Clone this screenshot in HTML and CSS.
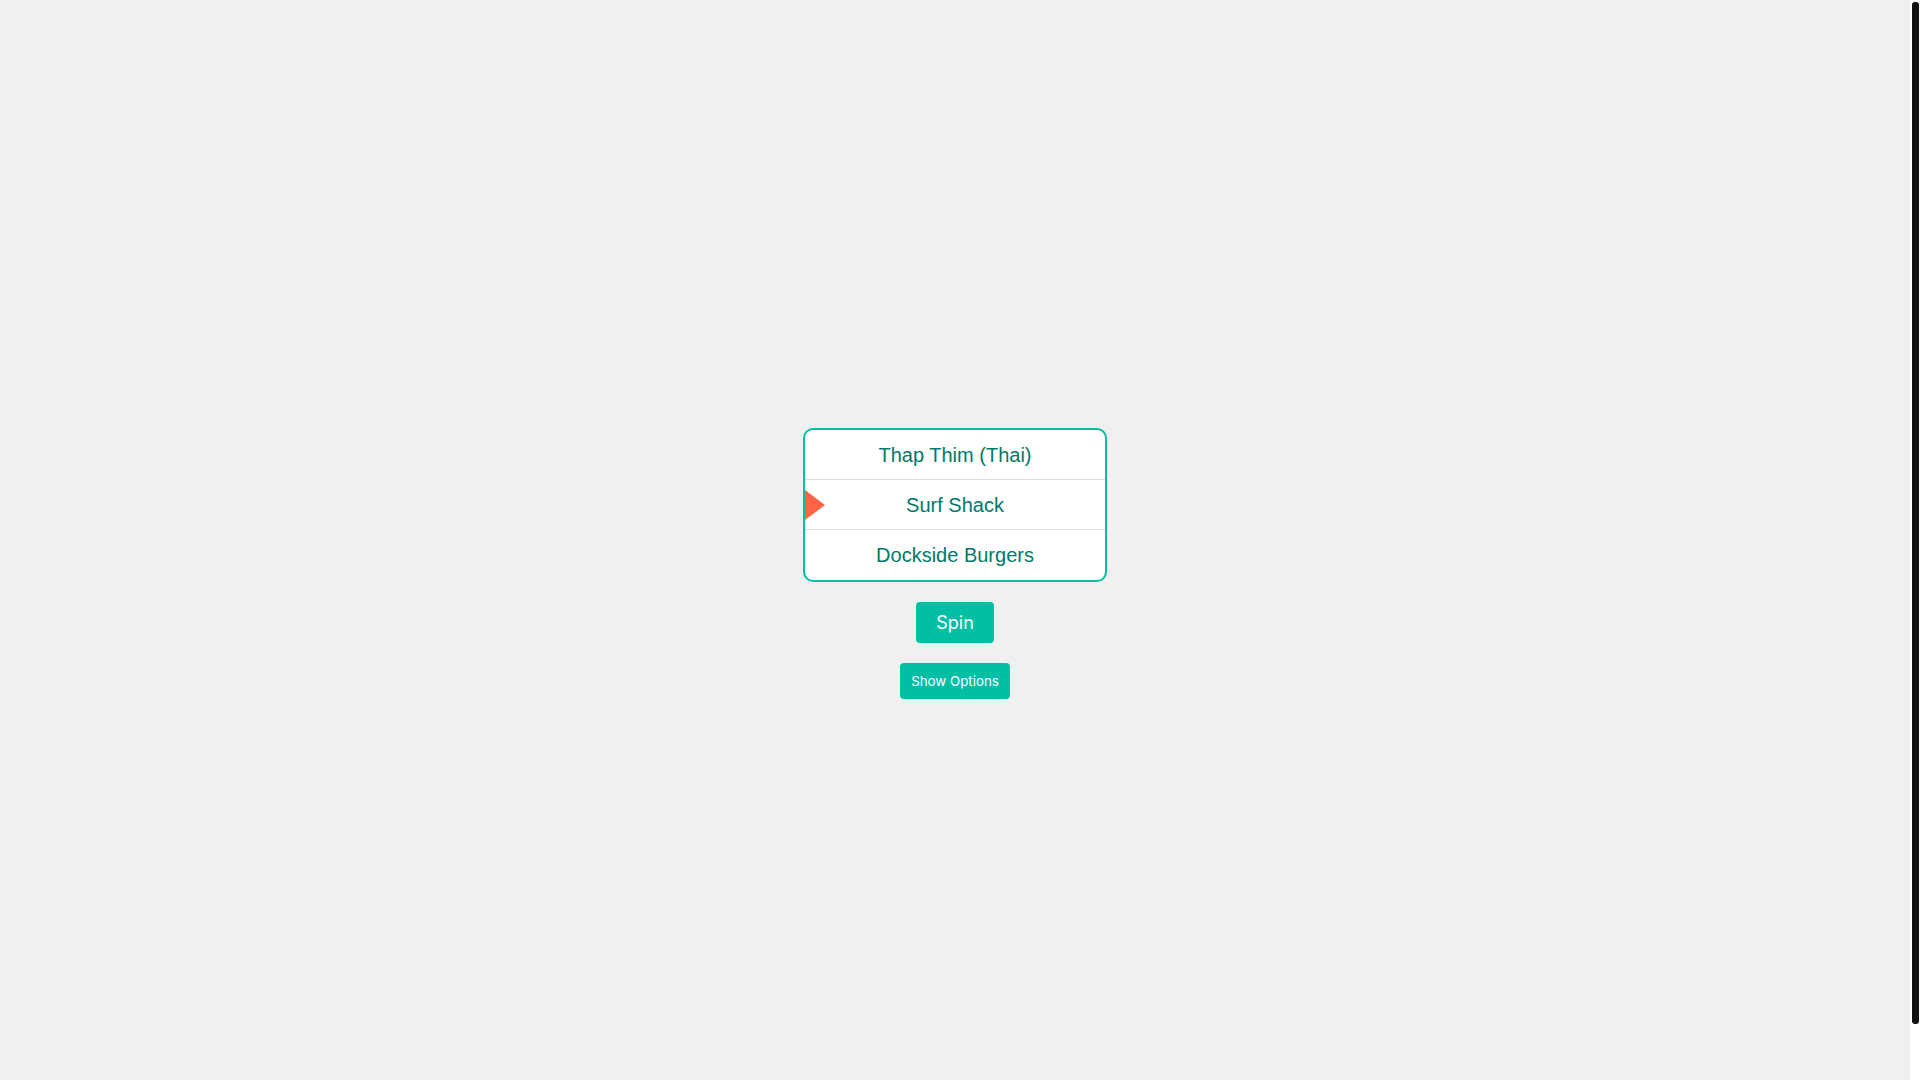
FILE: index.html
```html
<!DOCTYPE html>
<html lang="en">
<head>
<meta charset="utf-8">
<title>Restaurant Spinner</title>
<link rel="stylesheet" href="styles.css">
</head>
<body>
<main class="app">
  <div class="wheel">
    <span class="pointer"></span>
    <ul class="options">
      <li class="option">Thap Thim (Thai)</li>
      <li class="option">Surf Shack</li>
      <li class="option">Dockside Burgers</li>
    </ul>
  </div>
  <button class="btn btn-spin" type="button">Spin</button>
  <button class="btn btn-toggle" type="button">Show Options</button>
</main>
<div class="scrollbar" aria-hidden="true">
  <div class="scrollbar-thumb"></div>
</div>
</body>
</html>
```

FILE: styles.css
```css
html {
  background: #f0f0f0;
}

body {
  margin: 0;
  background: #f0f0f0;
  font-family: "Liberation Sans", Arial, sans-serif;
}

.app {
  width: calc(100% - 10px);
  min-height: 100vh;
  padding: 23px 0 34px;
  display: flex;
  flex-direction: column;
  align-items: center;
  justify-content: center;
  gap: 20px;
}

.wheel {
  position: relative;
  width: 300px;
  background: #ffffff;
  border: 2px solid #00bfa5;
  border-radius: 10px;
  overflow: hidden;
}

.options {
  list-style: none;
  margin: 0;
  padding: 0;
}

.option {
  padding: 14px 10px 12px;
  line-height: 23px;
  font-size: 20px;
  color: #00796b;
  text-align: center;
  border-bottom: 1px solid #dddddd;
}

.option:last-child {
  border-bottom: none;
  padding-bottom: 13px;
}

.pointer {
  position: absolute;
  left: 0;
  top: calc(50% - 15px);
  width: 0;
  height: 0;
  border-top: 15px solid transparent;
  border-bottom: 15px solid transparent;
  border-left: 20px solid #ff6347;
}

.btn {
  border: none;
  border-radius: 4px;
  background: #00bfa5;
  color: #ffffff;
  font-family: Inter, "Liberation Sans", sans-serif;
  cursor: pointer;
}

.btn-spin {
  padding: 10px 20px;
  font-size: 18px;
}

.btn-toggle {
  padding: 10px 11px;
  font-size: 13.333px;
}

.scrollbar {
  position: fixed;
  top: 0;
  right: 0;
  bottom: 0;
  width: 10px;
  background: #ffffff;
  display: flex;
  flex-direction: column;
}

.scrollbar-thumb {
  margin: 2px 1px 0 2px;
  height: 1022px;
  background: #111111;
  border-radius: 3px;
}
```
